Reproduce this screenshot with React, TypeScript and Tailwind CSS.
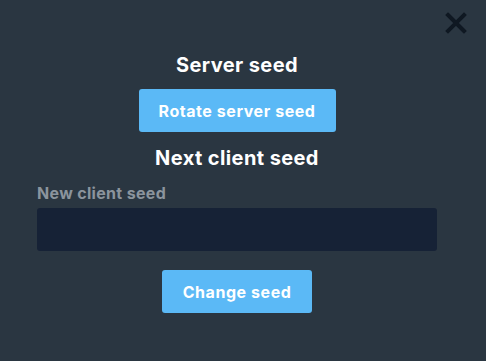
import React from "react";

export default function App() {
  return (
    <div
      className="relative w-[486px] h-[361px] bg-[#2a3641] text-white overflow-hidden"
      style={{ fontFamily: "Inter, 'Open Sans', sans-serif" }}
    >
      <button className="absolute left-[445px] top-[12px] w-[22px] h-[22px]" aria-label="close">
        <svg viewBox="0 0 22 22" width="22" height="22">
          <path d="M3 3 L19 19 M19 3 L3 19" stroke="#0f1822" strokeWidth="4" strokeLinecap="square" />
        </svg>
      </button>
      <div className="flex flex-col items-center pt-[51px] pr-[12px]">
        <h2 className="text-[20px] leading-[28px] font-bold tracking-[0.02em]">Server seed</h2>
        <button className="mt-[10px] w-[197px] h-[43px] rounded-[3px] bg-[#5bb9f6] text-[16px] font-bold tracking-[0.035em] text-white">
          Rotate server seed
        </button>
        <h2 className="mt-[12px] text-[20px] leading-[28px] font-bold tracking-[0.02em]">Next client seed</h2>
        <div className="mt-[9px] w-[400px] flex flex-col">
          <label className="text-[16px] leading-[24px] font-bold tracking-[0.02em] text-[#8b949d]">New client seed</label>
          <input className="mt-[3px] h-[43px] w-full rounded-[3px] bg-[#162236] outline-none px-3 text-white" />
        </div>
        <button className="mt-[19px] w-[150px] h-[43px] rounded-[3px] bg-[#5bb9f6] text-[16px] font-bold tracking-[0.035em] text-white">
          Change seed
        </button>
      </div>
    </div>
  );
}
